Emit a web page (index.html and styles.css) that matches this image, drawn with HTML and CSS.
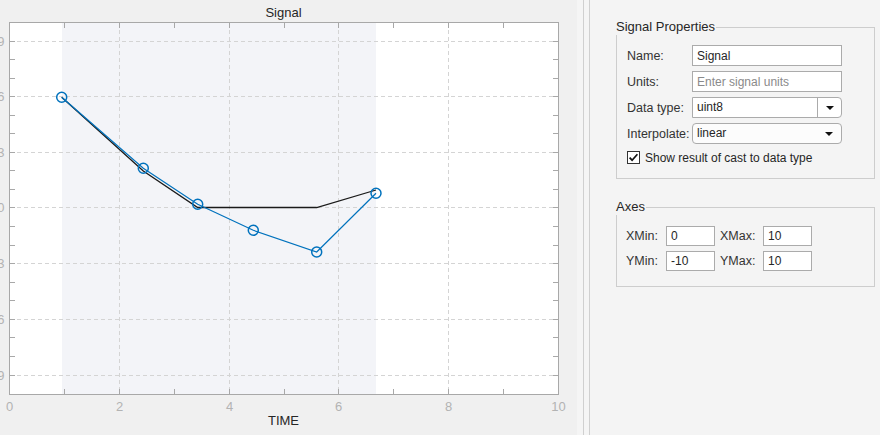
FILE: index.html
```html
<!DOCTYPE html>
<html lang="en">
<head>
<meta charset="utf-8">
<title>Signal Editor</title>
<link rel="stylesheet" href="styles.css">
</head>
<body>
<div class="app">
  <div class="plot-pane">
    <svg class="plot" width="577" height="435" viewBox="0 0 577 435" xmlns="http://www.w3.org/2000/svg">
      <text class="plot-title" x="283.5" y="17" text-anchor="middle">Signal</text>
      <rect x="9.5" y="22.5" width="549" height="372" fill="#ffffff"/>
      <rect x="62" y="23" width="314" height="371" fill="#f3f4f8"/>
      <path class="grid" d="M119.5 23V394M229.5 23V394M338.5 23V394M448.5 23V394"/>
      <path class="grid" d="M10 41.5H558M10 96.5H558M10 152.5H558M10 207.5H558M10 263.5H558M10 319.5H558M10 375.5H558"/>
      <path class="tick" d="M64.5 394V389M119.5 394V389M174.5 394V389M229.5 394V389M284.5 394V389M338.5 394V389M393.5 394V389M448.5 394V389M503.5 394V389
        M64.5 23V28M119.5 23V28M174.5 23V28M229.5 23V28M284.5 23V28M338.5 23V28M393.5 23V28M448.5 23V28M503.5 23V28"/>
      <path class="tick" d="M10 41.5H15M10 59.5H15M10 78.5H15M10 96.5H15M10 115.5H15M10 133.5H15M10 152.5H15M10 170.5H15M10 189.5H15M10 207.5H15M10 226.5H15M10 245.5H15M10 263.5H15M10 282.5H15M10 300.5H15M10 319.5H15M10 337.5H15M10 356.5H15M10 375.5H15
        M558 41.5H553M558 59.5H553M558 78.5H553M558 96.5H553M558 115.5H553M558 133.5H553M558 152.5H553M558 170.5H553M558 189.5H553M558 207.5H553M558 226.5H553M558 245.5H553M558 263.5H553M558 282.5H553M558 300.5H553M558 319.5H553M558 337.5H553M558 356.5H553M558 375.5H553"/>
      <rect class="axis" x="9.5" y="22.5" width="549" height="372" fill="none"/>
      <g class="ticklabel-x" text-anchor="middle">
        <text x="9.5" y="411">0</text>
        <text x="119.5" y="411">2</text>
        <text x="229.5" y="411">4</text>
        <text x="338.5" y="411">6</text>
        <text x="448.5" y="411">8</text>
        <text x="558.5" y="411">10</text>
      </g>
      <g class="ticklabel-y" text-anchor="end">
        <text x="4.5" y="46">9</text>
        <text x="4.5" y="101">6</text>
        <text x="4.5" y="157">3</text>
        <text x="4.5" y="212">0</text>
        <text x="4.5" y="268">-3</text>
        <text x="4.5" y="324">-6</text>
        <text x="4.5" y="380">-9</text>
      </g>
      <text class="xlabel" x="283.5" y="425" text-anchor="middle">TIME</text>
      <polyline class="cast" points="61.7,97.3 143.3,171 197.7,207.5 316.7,207.5 376,190"/>
      <polyline class="signal" points="61.7,97.3 143.3,168.3 197.7,204.3 253.3,230.3 316.7,252 376,193.3"/>
      <g class="marker">
        <circle cx="61.7" cy="97.3" r="5"/>
        <circle cx="143.3" cy="168.3" r="5"/>
        <circle cx="197.7" cy="204.3" r="5"/>
        <circle cx="253.3" cy="230.3" r="5"/>
        <circle cx="316.7" cy="252" r="5"/>
        <circle cx="376" cy="193.3" r="5"/>
      </g>
    </svg>
  </div>

  <div class="splitter"><div class="grip"></div></div>

  <div class="props">
    <div class="group group-signal">
      <div class="group-title">Signal Properties</div>
      <div class="form">
        <span class="lbl">Name:</span>
        <input class="text" type="text" value="Signal">
        <span class="lbl">Units:</span>
        <input class="text" type="text" placeholder="Enter signal units">
        <span class="lbl">Data type:</span>
        <div class="combo">
          <span class="combo-value">uint8</span>
          <span class="combo-btn"><span class="caret"></span></span>
        </div>
        <span class="lbl">Interpolate:</span>
        <div class="popup">
          <span class="combo-value">linear</span>
          <span class="popup-btn"><span class="caret"></span></span>
        </div>
      </div>
      <div class="check">
        <svg class="checkbox" width="13" height="13" viewBox="0 0 13 13" xmlns="http://www.w3.org/2000/svg">
          <rect x="0.5" y="0.5" width="12" height="12" fill="#ffffff" stroke="#333333"/>
          <path d="M2.6 6.6 L5.1 9.2 L10.4 3.2" fill="none" stroke="#111111" stroke-width="1.7"/>
        </svg>
        <span class="check-text">Show result of cast to data type</span>
      </div>
    </div>

    <div class="group group-axes">
      <div class="group-title">Axes</div>
      <div class="axes-form">
        <span class="lbl">XMin:</span>
        <input class="text small" type="text" value="0">
        <span class="lbl lbl-gap">XMax:</span>
        <input class="text small" type="text" value="10">
        <span class="lbl">YMin:</span>
        <input class="text small" type="text" value="-10">
        <span class="lbl lbl-gap">YMax:</span>
        <input class="text small" type="text" value="10">
      </div>
    </div>
  </div>
</div>
</body>
</html>
```

FILE: styles.css
```css
* { box-sizing: border-box; }

html, body {
  margin: 0;
  padding: 0;
}

body {
  width: 880px;
  height: 435px;
  overflow: hidden;
  font-family: "Liberation Sans", Arial, sans-serif;
  color: #262626;
}

.app {
  display: flex;
  height: 435px;
}

/* ---------- plot ---------- */
.plot-pane {
  flex: none;
  width: 577px;
  background: #f0f0f0;
}

.plot {
  display: block;
  font-family: "Liberation Sans", Arial, sans-serif;
}

.plot-title,
.xlabel {
  font-size: 13px;
  fill: #262626;
}

.grid {
  fill: none;
  stroke: #d4d4d4;
  stroke-width: 1;
  stroke-dasharray: 4 3;
}

.tick {
  fill: none;
  stroke: #a8a8a8;
  stroke-width: 1;
}

.axis {
  stroke: #a8a8a8;
  stroke-width: 1;
}

.ticklabel-x text,
.ticklabel-y text {
  font-size: 13px;
  fill: #b3b3b3;
}

.cast {
  fill: none;
  stroke: #1a1a1a;
  stroke-width: 1.3;
}

.signal {
  fill: none;
  stroke: #0072bd;
  stroke-width: 1.2;
}

.marker circle {
  fill: none;
  stroke: #0072bd;
  stroke-width: 1.5;
}

/* ---------- splitter ---------- */
.splitter {
  flex: none;
  width: 13px;
  padding-left: 6px;
  background: #f5f5f5;
}

.grip {
  width: 7px;
  height: 100%;
  border-left: 1px solid #d0d0d0;
  border-right: 1px solid #d0d0d0;
}

/* ---------- property panel ---------- */
.props {
  flex: 1;
  background: #f4f4f4;
  padding: 27px 5px 0 26px;
  display: flex;
  flex-direction: column;
  gap: 28px;
}

.group {
  position: relative;
  border: 1px solid #cdcdcd;
}

.group-signal {
  height: 152px;
  padding: 17px 0 0 10px;
}

.group-axes {
  height: 80px;
  padding: 18px 0 0 9px;
}

.group-title {
  position: absolute;
  left: -1px;
  top: -9px;
  font-size: 13px;
  line-height: 16px;
  color: #262626;
  background: #f4f4f4;
  padding-right: 1px;
  white-space: nowrap;
}

.form {
  display: grid;
  grid-template-columns: 65px 150px;
  grid-auto-rows: 21px;
  row-gap: 5px;
  align-items: center;
}

.lbl {
  font-size: 12.5px;
  color: #333333;
  white-space: nowrap;
}

.text {
  width: 100%;
  height: 21px;
  margin: 0;
  padding: 0 4px;
  border: 1px solid #ababab;
  background: #ffffff;
  font-family: "Liberation Sans", Arial, sans-serif;
  font-size: 12px;
  color: #262626;
  outline: none;
}

.text::placeholder {
  color: #8a8a8a;
}

.combo,
.popup {
  display: flex;
  align-items: center;
  height: 21px;
  border: 1px solid #ababab;
  background: #ffffff;
  font-size: 12px;
  color: #262626;
}

.combo {
  border-radius: 0 4px 4px 0;
}

.popup {
  border-radius: 4px;
  background: #fcfcfc;
}

.combo-value {
  flex: 1;
  padding-left: 4px;
  line-height: 19px;
}

.combo-btn,
.popup-btn {
  display: flex;
  align-items: center;
  justify-content: center;
  width: 24px;
  height: 100%;
}

.combo-btn {
  border-left: 1px solid #ababab;
}

.caret {
  width: 0;
  height: 0;
  border-left: 4px solid transparent;
  border-right: 4px solid transparent;
  border-top: 4px solid #111111;
}

.check {
  display: flex;
  align-items: center;
  gap: 5px;
  margin-top: 7px;
  height: 13px;
}

.checkbox {
  display: block;
  flex: none;
}

.check-text {
  font-size: 12px;
  color: #262626;
  white-space: nowrap;
}

.axes-form {
  display: grid;
  grid-template-columns: 40px 49px 48px 49px;
  grid-auto-rows: 20px;
  row-gap: 5px;
  align-items: center;
}

.lbl-gap {
  padding-left: 5px;
}

.text.small {
  height: 20px;
}
```
